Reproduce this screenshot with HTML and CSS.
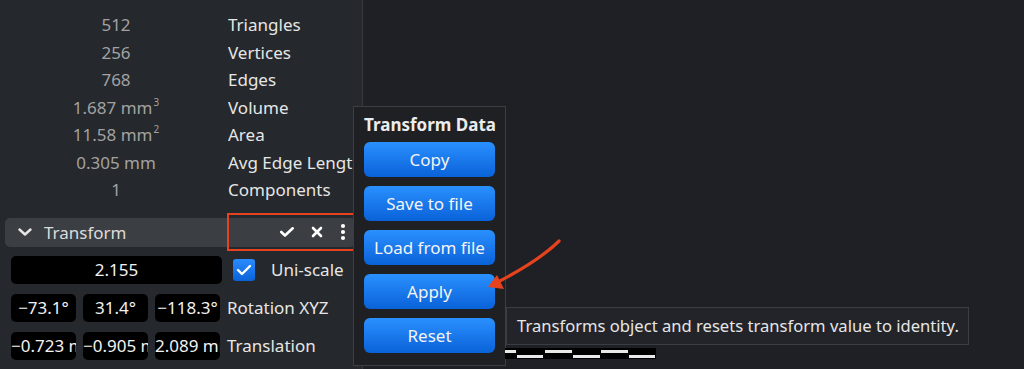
FILE: index.html
```html
<!DOCTYPE html>
<html lang="en">
<head>
    <meta charset="UTF-8">
    <meta name="viewport" content="width=device-width, initial-scale=1">
    <title>Transform Data</title>
    <link rel="stylesheet" href="styles.css">
</head>
<body>
    <div class="panel">
        <div class="stats">
            <div class="stat-value">512</div><div class="stat-label">Triangles</div>
            <div class="stat-value">256</div><div class="stat-label">Vertices</div>
            <div class="stat-value">768</div><div class="stat-label">Edges</div>
            <div class="stat-value">1.687 mm<sup>3</sup></div><div class="stat-label">Volume</div>
            <div class="stat-value">11.58 mm<sup>2</sup></div><div class="stat-label">Area</div>
            <div class="stat-value">0.305 mm</div><div class="stat-label">Avg Edge Length</div>
            <div class="stat-value">1</div><div class="stat-label">Components</div>
        </div>

        <div class="section-header">
            <svg class="chevron" width="14" height="8" viewBox="0 0 14 8"><polyline points="1.5,1.5 7,6.5 12.5,1.5" fill="none" stroke="#e6e6e6" stroke-width="2.4" stroke-linecap="round" stroke-linejoin="round"/></svg>
            <span class="section-title">Transform</span>
            <div class="header-actions">
                <svg width="14" height="10" viewBox="0 0 14 10"><polyline points="1.3,5 5,8.5 12.7,1.3" fill="none" stroke="#fff" stroke-width="2.6" stroke-linecap="round" stroke-linejoin="round"/></svg>
                <svg width="12" height="12" viewBox="0 0 12 12"><path d="M2 2 L10 10 M10 2 L2 10" stroke="#fff" stroke-width="2.6" stroke-linecap="round"/></svg>
                <svg width="6" height="18" viewBox="0 0 6 18"><circle cx="3" cy="3" r="2.1" fill="#fff"/><circle cx="3" cy="9" r="2.1" fill="#fff"/><circle cx="3" cy="15" r="2.1" fill="#fff"/></svg>
            </div>
        </div>

        <div class="control-row">
            <div class="field field-wide">2.155</div>
            <div class="checkbox">
                <svg width="16" height="12" viewBox="0 0 16 12"><polyline points="2,6 6,10 14,2" fill="none" stroke="#fff" stroke-width="2.4" stroke-linecap="round" stroke-linejoin="round"/></svg>
            </div>
            <span class="control-label uni">Uni-scale</span>
        </div>
        <div class="control-row">
            <div class="field">−73.1°</div>
            <div class="field">31.4°</div>
            <div class="field">−118.3°</div>
            <span class="control-label">Rotation XYZ</span>
        </div>
        <div class="control-row">
            <div class="field">−0.723 mm</div>
            <div class="field">−0.905 mm</div>
            <div class="field">2.089 mm</div>
            <span class="control-label">Translation</span>
        </div>
    </div>

    <div class="popup">
        <div class="popup-title">Transform Data</div>
        <div class="popup-btn">Copy</div>
        <div class="popup-btn">Save to file</div>
        <div class="popup-btn">Load from file</div>
        <div class="popup-btn">Apply</div>
        <div class="popup-btn">Reset</div>
    </div>

    <div class="tooltip">Transforms object and resets transform value to identity.</div>

    <svg class="ruler" width="151" height="11" viewBox="0 0 151 11">
        <rect width="151" height="11" fill="#000"/>
        <rect x="0" y="2" width="11" height="3" fill="#e8e8e8"/>
        <rect x="12" y="7" width="26" height="3" fill="#e8e8e8"/>
        <rect x="40" y="2" width="27" height="3" fill="#e8e8e8"/>
        <rect x="68" y="7" width="27" height="3" fill="#e8e8e8"/>
        <rect x="96" y="2" width="27" height="3" fill="#e8e8e8"/>
        <rect x="124" y="7" width="26" height="3" fill="#e8e8e8"/>
    </svg>

    <svg class="arrow" width="90" height="70" viewBox="0 0 90 70">
        <path d="M79 11 Q60 30 18 52" fill="none" stroke="#e5421d" stroke-width="3.2" stroke-linecap="round"/>
        <polygon points="8,57 17,45 24,59" fill="#e5421d"/>
    </svg>
</body>
</html>
```

FILE: styles.css
```css
html,
body {
    margin: 0;
    width: 100%;
    height: 100%;
    overflow: hidden;
}

body {
    background-color: #1e2025;
    font-family: "Noto Sans", "DejaVu Sans", sans-serif;
    font-size: 17px;
    color: #e6e6e6;
    position: relative;
}

.panel {
    width: 363px;
    height: 100%;
    box-sizing: border-box;
    background-color: #25282c;
    border-right: 1px solid #35383c;
    padding-top: 11px;
}

.stats {
    display: grid;
    grid-template-columns: 228px 1fr;
    line-height: 27.5px;
}

.stat-value {
    padding-left: 4px;
    text-align: center;
    color: #a2a2a2;
    white-space: nowrap;
}

.stat-value sup {
    font-size: 10px;
    line-height: 0;
    vertical-align: 8px;
    margin-left: 1px;
}

.stat-label {
    white-space: nowrap;
    overflow: hidden;
}

.section-header {
    display: flex;
    align-items: center;
    margin: 14px 7px 0 5px;
    height: 29px;
    background-color: #3b3e43;
    border-radius: 5px;
}

.chevron {
    margin-left: 13px;
}

.section-title {
    margin-left: 12px;
    color: #dcdcdc;
}

.header-actions {
    position: relative;
    margin-left: auto;
    width: 126px;
    height: 29px;
    display: flex;
    align-items: center;
    justify-content: flex-end;
    gap: 17px;
    padding-right: 9px;
    box-sizing: border-box;
}

.header-actions::after {
    content: "";
    position: absolute;
    left: -2px;
    top: -5px;
    right: -2px;
    bottom: -4px;
    border: 2px solid #e5421d;
}

.control-row {
    display: flex;
    align-items: center;
    gap: 7px;
    padding-left: 11px;
    margin-top: 10px;
}

.control-row:nth-of-type(3) {
    margin-top: 9px;
}

.field {
    width: 65px;
    height: 28px;
    line-height: 28px;
    background-color: #000;
    border-radius: 5px;
    color: #f2f2f2;
    text-align: center;
    white-space: nowrap;
    overflow: hidden;
}

.field-wide {
    width: 211px;
}

.checkbox {
    width: 22px;
    height: 22px;
    margin-left: 4px;
    border-radius: 3px;
    background: linear-gradient(#2a8cff, #0a62d8);
    display: flex;
    align-items: center;
    justify-content: center;
}

.control-label {
    white-space: nowrap;
}

.uni {
    margin-left: 9px;
}

.popup {
    position: absolute;
    left: 353px;
    top: 106px;
    width: 153px;
    height: 260px;
    box-sizing: border-box;
    background-color: #1e2024;
    border: 1px solid #3b3e42;
    padding: 6px 10px 0 10px;
    display: flex;
    flex-direction: column;
    gap: 8.5px;
}

.popup-title {
    font-size: 17px;
    font-weight: bold;
    line-height: 24px;
    margin-bottom: -4px;
    color: #ececec;
    white-space: nowrap;
}

.popup-btn {
    height: 35.5px;
    line-height: 35px;
    border-radius: 6px;
    background: linear-gradient(#2a90ff, #0a62d8);
    color: #f4f4f4;
    text-align: center;
    white-space: nowrap;
}

.tooltip {
    position: absolute;
    left: 506px;
    top: 307px;
    width: 463px;
    height: 38px;
    box-sizing: border-box;
    background-color: #222429;
    border: 1px solid #3a3d41;
    padding-left: 10px;
    font-size: 16.6px;
    line-height: 36px;
    white-space: nowrap;
}

.ruler {
    position: absolute;
    left: 505px;
    top: 348px;
}

.arrow {
    position: absolute;
    left: 480px;
    top: 230px;
}
```
